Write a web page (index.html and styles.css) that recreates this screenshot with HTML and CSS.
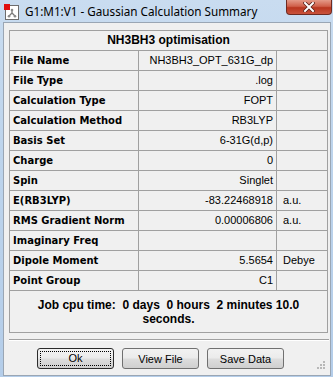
FILE: index.html
```html
<!DOCTYPE html>
<html lang="en">
<head>
  <meta charset="UTF-8">
  <title>Gaussian Calculation Summary</title>
  <link rel="stylesheet" href="styles.css">
</head>
<body>
  <div class="window">
    <div class="titlebar">
      <svg class="app-icon" width="17" height="17" viewBox="0 0 17 17">
        <rect x="1.5" y="1.5" width="13" height="14" fill="#fff" stroke="#6d6d6d"/>
        <path d="M8 6 L8 9 M8 9 L5 12 M8 9 L11 12" stroke="#7a7a7a" stroke-width="1.3" fill="none"/>
        <circle cx="8" cy="6" r="1.3" fill="#8a8a8a"/>
        <circle cx="5" cy="12.3" r="1.3" fill="#8a8a8a"/>
        <circle cx="11" cy="12.3" r="1.3" fill="#8a8a8a"/>
        <rect x="0" y="0" width="6" height="6" fill="#e01010"/>
      </svg>
      <span class="title">G1:M1:V1 - Gaussian Calculation Summary</span>
      <div class="close-btn">
        <svg width="12" height="10" viewBox="0 0 12 10">
          <path d="M2 1 L10 9 M10 1 L2 9" stroke="#5b2018" stroke-width="3.6" stroke-linecap="square"/>
          <path d="M2 1 L10 9 M10 1 L2 9" stroke="#fff" stroke-width="2" stroke-linecap="square"/>
        </svg>
      </div>
    </div>

    <div class="client">
      <div class="summary-box">
        <table class="summary">
          <colgroup>
            <col class="col-label">
            <col class="col-value">
            <col class="col-unit">
          </colgroup>
          <tr><th colspan="3">NH3BH3 optimisation</th></tr>
          <tr><td class="label">File Name</td><td class="value">NH3BH3_OPT_631G_dp</td><td class="unit"></td></tr>
          <tr><td class="label">File Type</td><td class="value">.log</td><td class="unit"></td></tr>
          <tr><td class="label">Calculation Type</td><td class="value">FOPT</td><td class="unit"></td></tr>
          <tr><td class="label">Calculation Method</td><td class="value">RB3LYP</td><td class="unit"></td></tr>
          <tr><td class="label">Basis Set</td><td class="value">6-31G(d,p)</td><td class="unit"></td></tr>
          <tr><td class="label">Charge</td><td class="value">0</td><td class="unit"></td></tr>
          <tr><td class="label">Spin</td><td class="value">Singlet</td><td class="unit"></td></tr>
          <tr><td class="label">E(RB3LYP)</td><td class="value">-83.22468918</td><td class="unit">a.u.</td></tr>
          <tr><td class="label">RMS Gradient Norm</td><td class="value">0.00006806</td><td class="unit">a.u.</td></tr>
          <tr><td class="label">Imaginary Freq</td><td class="value"></td><td class="unit"></td></tr>
          <tr><td class="label">Dipole Moment</td><td class="value">5.5654</td><td class="unit">Debye</td></tr>
          <tr><td class="label">Point Group</td><td class="value">C1</td><td class="unit"></td></tr>
        </table>
        <div class="cpu-time">Job cpu time:&nbsp; 0 days&nbsp; 0 hours&nbsp; 2 minutes 10.0<br>seconds.</div>
      </div>

      <div class="separator"></div>

      <div class="buttons">
        <button class="btn btn-default"><span class="focus">Ok</span></button>
        <button class="btn">View File</button>
        <button class="btn">Save Data</button>
      </div>

      <svg class="grip" width="9" height="9" viewBox="0 0 9 9">
        <rect x="6" y="0" width="2" height="2" fill="#b8b8b8"/>
        <rect x="3" y="3" width="2" height="2" fill="#b8b8b8"/>
        <rect x="6" y="3" width="2" height="2" fill="#b8b8b8"/>
        <rect x="0" y="6" width="2" height="2" fill="#b8b8b8"/>
        <rect x="3" y="6" width="2" height="2" fill="#b8b8b8"/>
        <rect x="6" y="6" width="2" height="2" fill="#b8b8b8"/>
      </svg>
    </div>
  </div>
</body>
</html>
```

FILE: styles.css
```css
body { margin: 0; padding: 0; background-color: #bcd3ec; font-family: "Liberation Sans", Arial, sans-serif; }

.window {
  width: 333px;
  height: 377px;
  display: flex;
  flex-direction: column;
  background: linear-gradient(to bottom, #c9dcf0 0%, #bdd4ec 40%, #b4cde9 100%);
}

/* title bar */
.titlebar {
  height: 22px;
  display: flex;
  align-items: flex-start;
}
.app-icon { margin: 4px 0 0 4px; flex-shrink: 0; }
.title {
  margin-left: 4px;
  font-family: "Noto Sans", "Open Sans", sans-serif;
  font-size: 11.7px;
  line-height: 22px;
  color: #000;
  white-space: nowrap;
}
.close-btn {
  margin-left: auto;
  margin-right: 1px;
  width: 46px;
  height: 15px;
  box-sizing: border-box;
  border: 1px solid #6e2a20;
  border-top: none;
  border-radius: 0 0 4px 4px;
  background: linear-gradient(to bottom, #e49a88 0%, #d0604a 45%, #b9361f 55%, #c9533c 100%);
  display: flex;
  align-items: center;
  justify-content: center;
}

/* client area */
.client {
  position: relative;
  flex: 1;
  margin: 0 2px 1px 3px;
  padding: 7px 0 0 5px;
  background-color: #f0f0f0;
  border: 1px solid #9aa6b4;
}

.summary-box {
  width: 319px;
  box-sizing: border-box;
  border: 1px solid #a0a0a0;
}

.summary {
  width: 317px;
  table-layout: fixed;
  border-collapse: separate;
  border-spacing: 0;
}
.col-label { width: 128px; }
.col-value { width: 138px; }
.col-unit { width: 51px; }

.summary th {
  padding: 0;
  line-height: 19px;
  border-bottom: 1px solid #a0a0a0;
  font-family: "Liberation Sans", Arial, sans-serif;
  font-weight: bold;
  font-size: 12px;
  text-align: center;
  color: #000;
}
.summary td {
  padding: 0;
  line-height: 19px;
  border-bottom: 1px solid #a0a0a0;
  font-size: 11px;
  color: #000;
  white-space: nowrap;
  overflow: hidden;
}
.summary td.label {
  padding-left: 3px;
  font-family: "DejaVu Sans", Verdana, sans-serif;
  font-weight: bold;
  font-size: 10px;
}
.summary td.value {
  padding-right: 3px;
  text-align: right;
  border-left: 1px solid #a0a0a0;
}
.summary td.unit {
  padding-left: 6px;
  border-left: 1px solid #a0a0a0;
}

.cpu-time {
  height: 41px;
  box-sizing: border-box;
  padding-top: 7px;
  text-align: center;
  font-weight: bold;
  font-size: 12px;
  line-height: 14px;
  color: #000;
}

.separator {
  width: 320px;
  height: 1px;
  margin-top: 6px;
  background-color: #a0a0a0;
  border-bottom: 1px solid #ffffff;
}

/* dialog buttons */
.buttons {
  display: flex;
  gap: 8px;
  margin: 7px 0 0 28px;
}
.btn {
  width: 77px;
  height: 21px;
  padding: 0;
  border: 1px solid #707070;
  border-radius: 3px;
  background: linear-gradient(to bottom, #f2f2f2 0%, #ebebeb 48%, #dddddd 52%, #cfcfcf 100%);
  font-family: "Liberation Sans", Arial, sans-serif;
  font-size: 11px;
  color: #000;
}
.btn-default {
  border-color: #2b2b2b;
  padding: 2px;
}
.btn-default .focus {
  display: block;
  height: 100%;
  box-sizing: border-box;
  border: 1px dotted #000;
  line-height: 13px;
}

.grip {
  position: absolute;
  right: 4px;
  bottom: 5px;
}
```
